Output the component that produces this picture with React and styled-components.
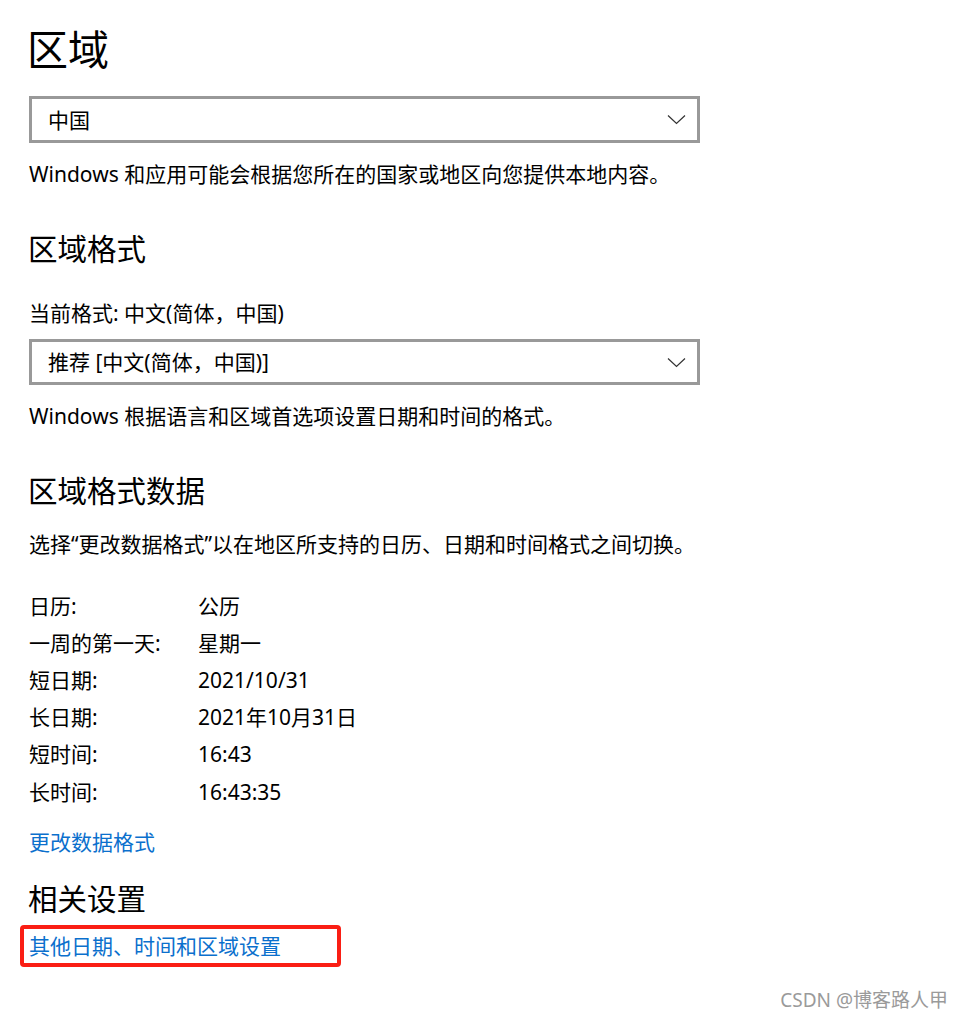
import React from "react";
import styled, { createGlobalStyle } from "styled-components";

const Global = createGlobalStyle`
  html, body { margin: 0; padding: 0; background: #fff; }
  body {
    font-family: "Noto Sans", "Noto Sans CJK SC", sans-serif;
    color: #000;
  }
`;

const Page = styled.div`
  width: 963px;
  min-height: 1021px;
  box-sizing: border-box;
  padding: 21px 0 0 29px;
  display: flex;
  flex-direction: column;
  align-items: flex-start;
`;

const Title = styled.h1`
  margin: 0 0 0 -2px;
  font-size: 41px;
  line-height: 56px;
  font-weight: 400;
`;

const Heading = styled.h2`
  margin: ${(p) => p.$mt}px 0 0 -1px;
  font-size: 29.5px;
  line-height: 40px;
  font-weight: 400;
`;

const Text = styled.p`
  margin: ${(p) => p.$mt}px 0 0;
  font-size: 21px;
  line-height: 28px;
  white-space: nowrap;
`;

const Select = styled.div`
  margin-top: ${(p) => p.$mt}px;
  box-sizing: border-box;
  width: 671px;
  height: ${(p) => p.$h}px;
  border: 3px solid #999;
  background: #fff;
  display: flex;
  align-items: center;
  justify-content: space-between;
  padding: 0 11px 0 16px;
  font-size: 21px;
  line-height: 28px;
`;

const Chevron = () => (
  <svg width="19" height="11" viewBox="0 0 19 11" fill="none">
    <polyline points="1,1.5 9.5,9.5 18,1.5" stroke="#333" strokeWidth="1.2" />
  </svg>
);

const DataList = styled.div`
  margin-top: 29px;
  display: grid;
  grid-template-columns: 169px auto;
  grid-auto-rows: 37.2px;
  font-size: 21px;
  align-items: center;
`;

const Cell = styled.div`
  line-height: 28px;
  white-space: nowrap;
`;

const Link = styled.a`
  display: block;
  margin-top: ${(p) => p.$mt || 0}px;
  font-size: 21px;
  line-height: 28px;
  color: #0b70cd;
  text-decoration: none;
  white-space: nowrap;
  cursor: pointer;
`;

const Highlight = styled.div`
  margin: 6px 0 0 -9px;
  box-sizing: border-box;
  width: 321px;
  height: 42px;
  border: 4px solid #fa1e14;
  border-radius: 4px;
  padding: 3px 0 0 5px;
`;

const Footer = styled.div`
  align-self: stretch;
  margin-top: 20px;
  padding-right: 15px;
  display: flex;
  justify-content: flex-end;
`;

const Watermark = styled.span`
  font-size: 19px;
  line-height: 26px;
  color: #9a9a9a;
  white-space: nowrap;
`;

const rows = [
  ["日历:", "公历"],
  ["一周的第一天:", "星期一"],
  ["短日期:", "2021/10/31"],
  ["长日期:", "2021年10月31日"],
  ["短时间:", "16:43"],
  ["长时间:", "16:43:35"],
];

export default function App() {
  return (
    <>
      <Global />
      <Page>
        <Title>区域</Title>
        <Select $mt={19} $h={47}>
          <span>中国</span>
          <Chevron />
        </Select>
        <Text $mt={17}>Windows 和应用可能会根据您所在的国家或地区向您提供本地内容。</Text>

        <Heading $mt={41}>区域格式</Heading>
        <Text $mt={30}>当前格式: 中文(简体，中国)</Text>
        <Select $mt={12} $h={46}>
          <span>推荐 [中文(简体，中国)]</span>
          <Chevron />
        </Select>
        <Text $mt={17}>Windows 根据语言和区域首选项设置日期和时间的格式。</Text>

        <Heading $mt={41}>区域格式数据</Heading>
        <Text $mt={19}>选择“更改数据格式”以在地区所支持的日历、日期和时间格式之间切换。</Text>
        <DataList>
          {rows.map(([k, v]) => (
            <React.Fragment key={k}>
              <Cell>{k}</Cell>
              <Cell>{v}</Cell>
            </React.Fragment>
          ))}
        </DataList>
        <Link $mt={18}>更改数据格式</Link>

        <Heading $mt={23}>相关设置</Heading>
        <Highlight>
          <Link>其他日期、时间和区域设置</Link>
        </Highlight>

        <Footer>
          <Watermark>CSDN @博客路人甲</Watermark>
        </Footer>
      </Page>
    </>
  );
}
